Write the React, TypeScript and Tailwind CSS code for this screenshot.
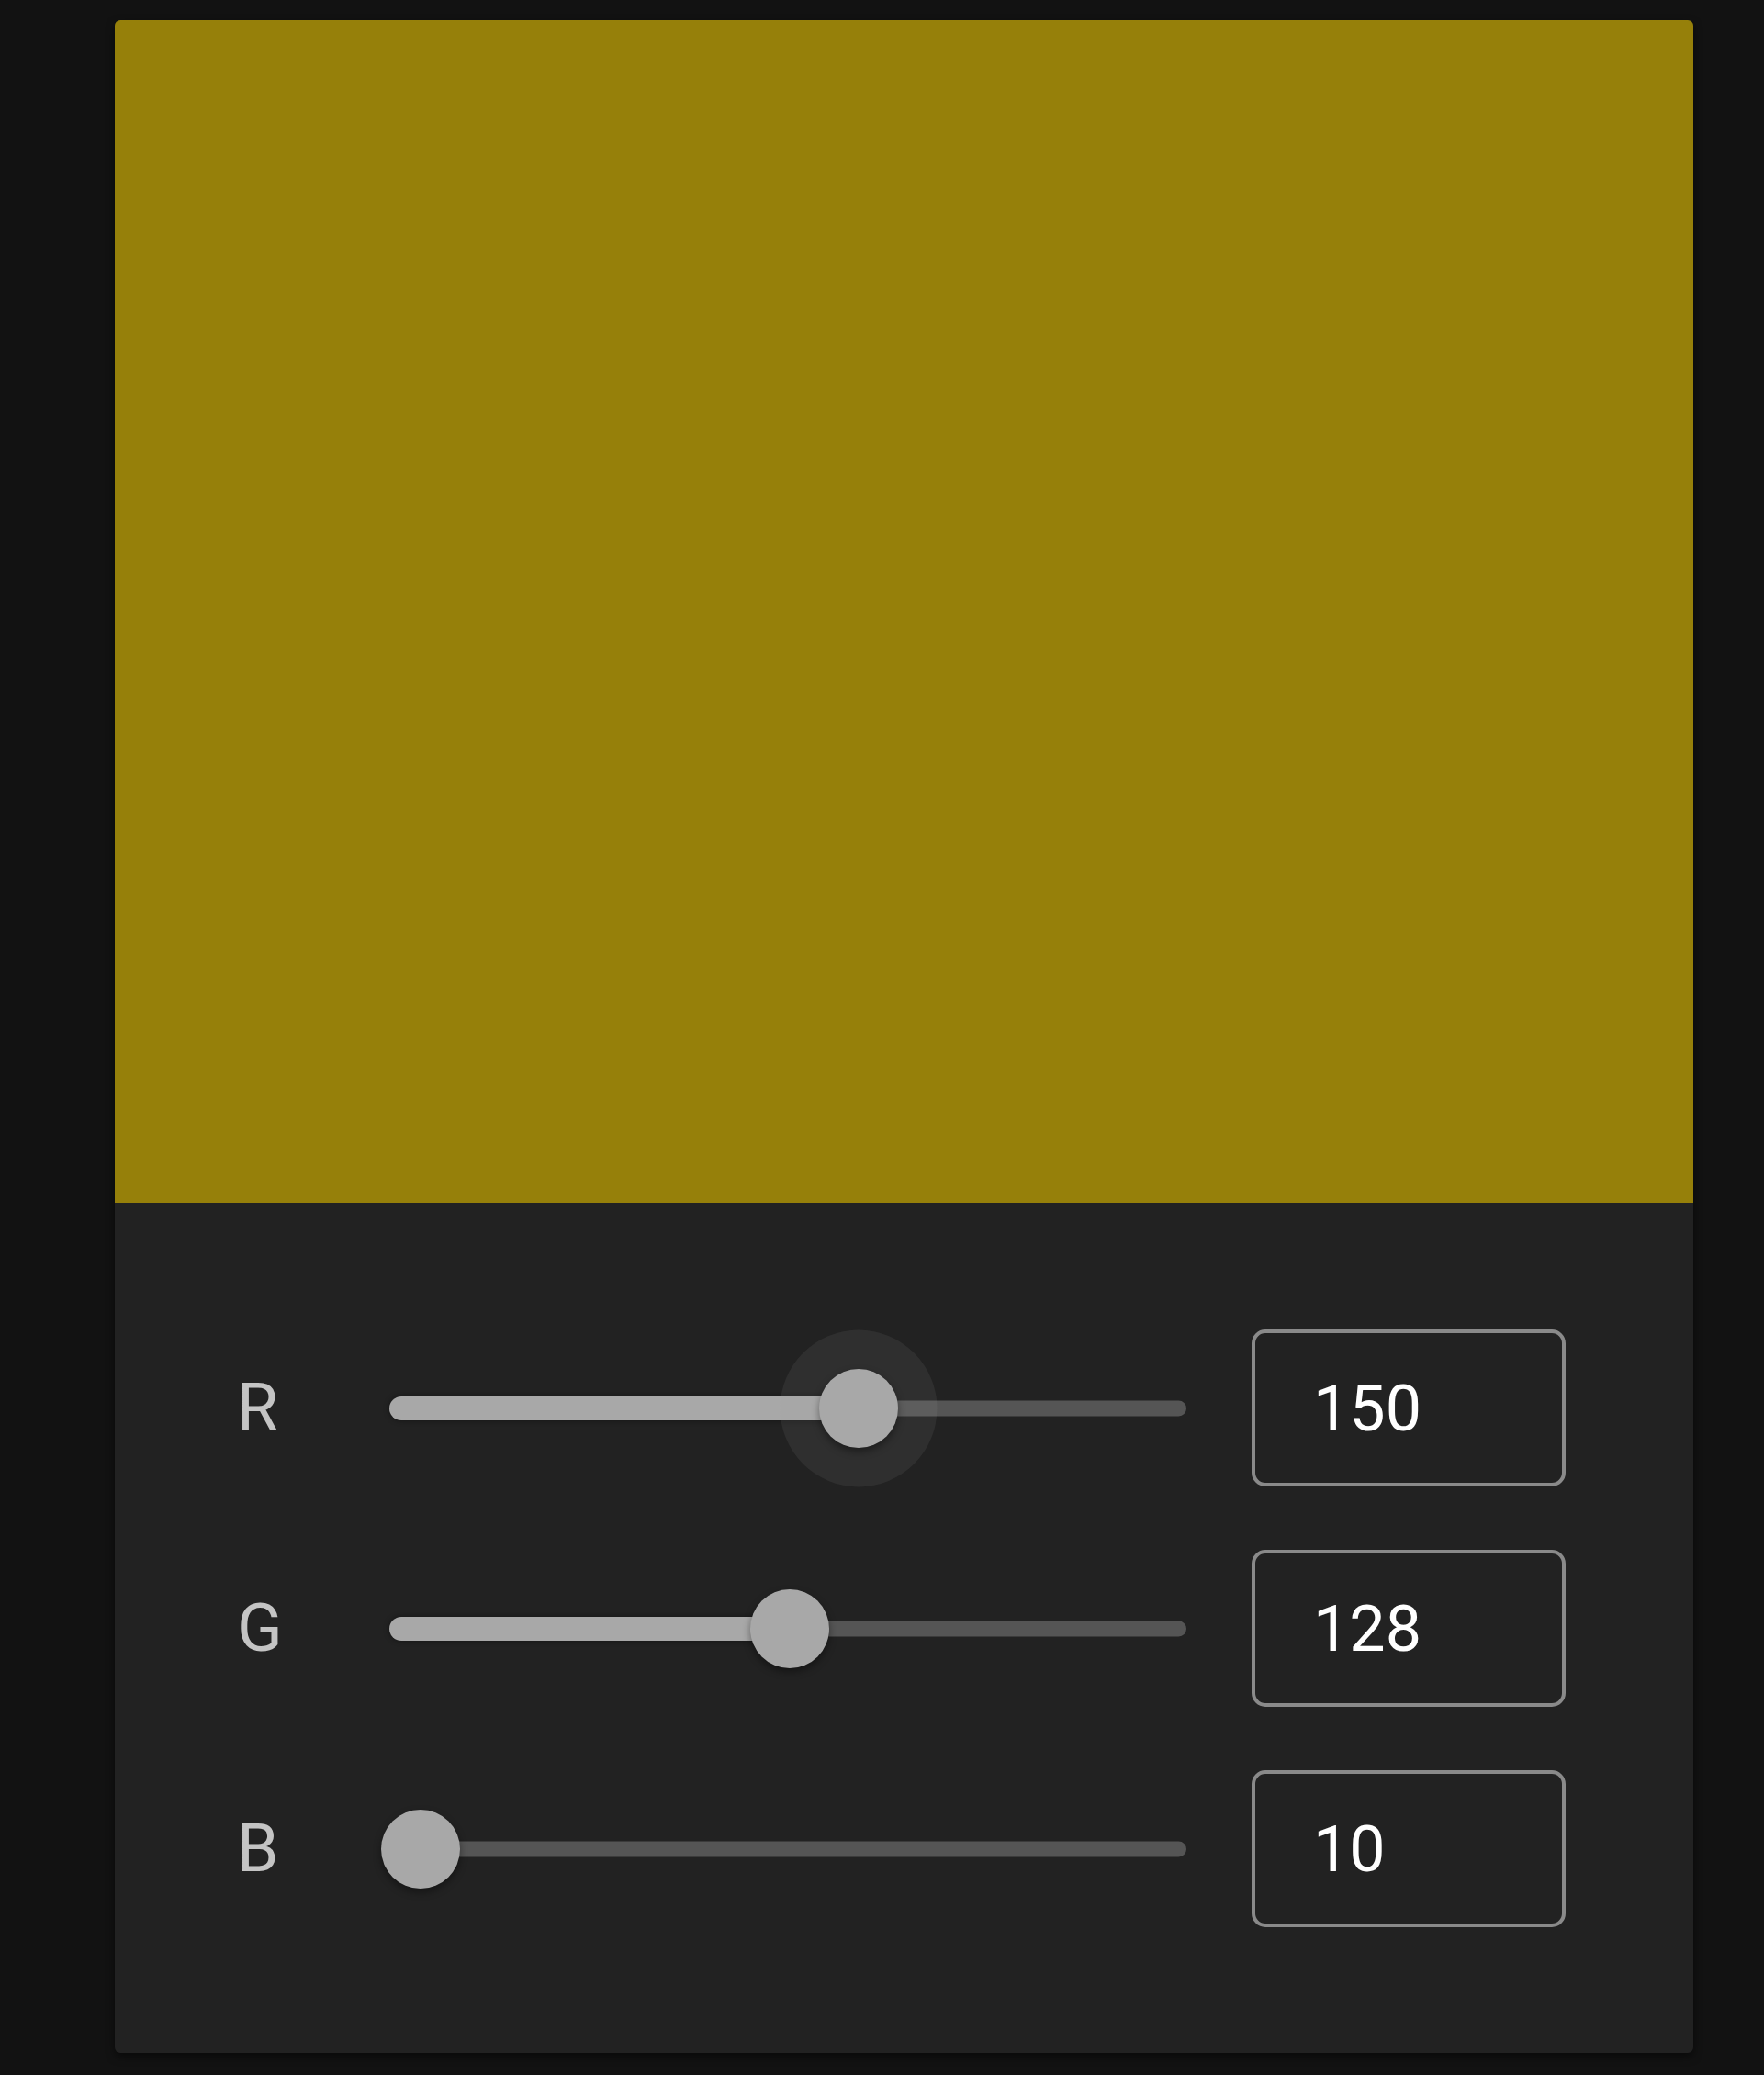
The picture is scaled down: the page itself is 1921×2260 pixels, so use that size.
import React, { useState } from 'react';

type Channel = 'r' | 'g' | 'b';

function ChannelSlider({ value, active }: { value: number; active?: boolean }) {
  const pct = (value / 255) * 100;
  return (
    <div className="relative h-[171px] w-[868px] flex-shrink-0">
      {/* rail */}
      <div className="absolute left-0 right-0 top-1/2 h-[17px] -translate-y-1/2 rounded-full bg-[#555555]" />
      {/* active track */}
      <div
        className="absolute left-0 top-1/2 h-[26px] -translate-y-1/2 rounded-full bg-[#a8a8a8] shadow-[0_0_6px_rgba(0,0,0,0.45)]"
        style={{ width: `${pct}%` }}
      />
      {active && (
        <div
          className="absolute top-1/2 h-[171px] w-[171px] -translate-x-1/2 -translate-y-1/2 rounded-full bg-[#a8a8a8]/10"
          style={{ left: `${pct}%` }}
        />
      )}
      <div
        className="absolute top-1/2 h-[86px] w-[86px] -translate-x-1/2 -translate-y-1/2 rounded-full bg-[#a8a8a8] shadow-[0_4px_8px_rgba(0,0,0,0.4)]"
        style={{ left: `${pct}%` }}
      />
    </div>
  );
}

export default function App() {
  const [color] = useState<Record<Channel, number>>({ r: 150, g: 128, b: 10 });
  const rows: { key: Channel; label: string }[] = [
    { key: 'r', label: 'R' },
    { key: 'g', label: 'G' },
    { key: 'b', label: 'B' },
  ];

  return (
    <div className="min-h-[2260px] w-full bg-[#121212] pt-[22px] font-['Roboto',sans-serif]">
      <div className="ml-[125px] w-[1719px] overflow-hidden rounded-[6px] bg-[#222222] shadow-[0_4px_10px_rgba(0,0,0,0.5)]">
        {/* Swatch */}
        <div
          className="h-[1288px] w-full"
          style={{ backgroundColor: `rgb(${color.r}, ${color.g}, ${color.b})` }}
        />

        {/* Controls */}
        <div className="flex flex-col gap-[69px] pb-[137px] pl-[133px] pt-[138px]">
          {rows.map((row) => (
            <div key={row.key} className="flex items-center">
              <span className="w-[166px] flex-shrink-0 text-[73px] leading-none text-[#c4c4c4]">
                {row.label}
              </span>
              <ChannelSlider value={color[row.key]} active={row.key === 'r'} />
              <div className="ml-[71px] flex h-[171px] w-[342px] items-center rounded-[15px] border-[4px] border-[#8a8a8a] pl-[63px] text-[70px] leading-none text-white">
                {color[row.key]}
              </div>
            </div>
          ))}
        </div>
      </div>
    </div>
  );
}
